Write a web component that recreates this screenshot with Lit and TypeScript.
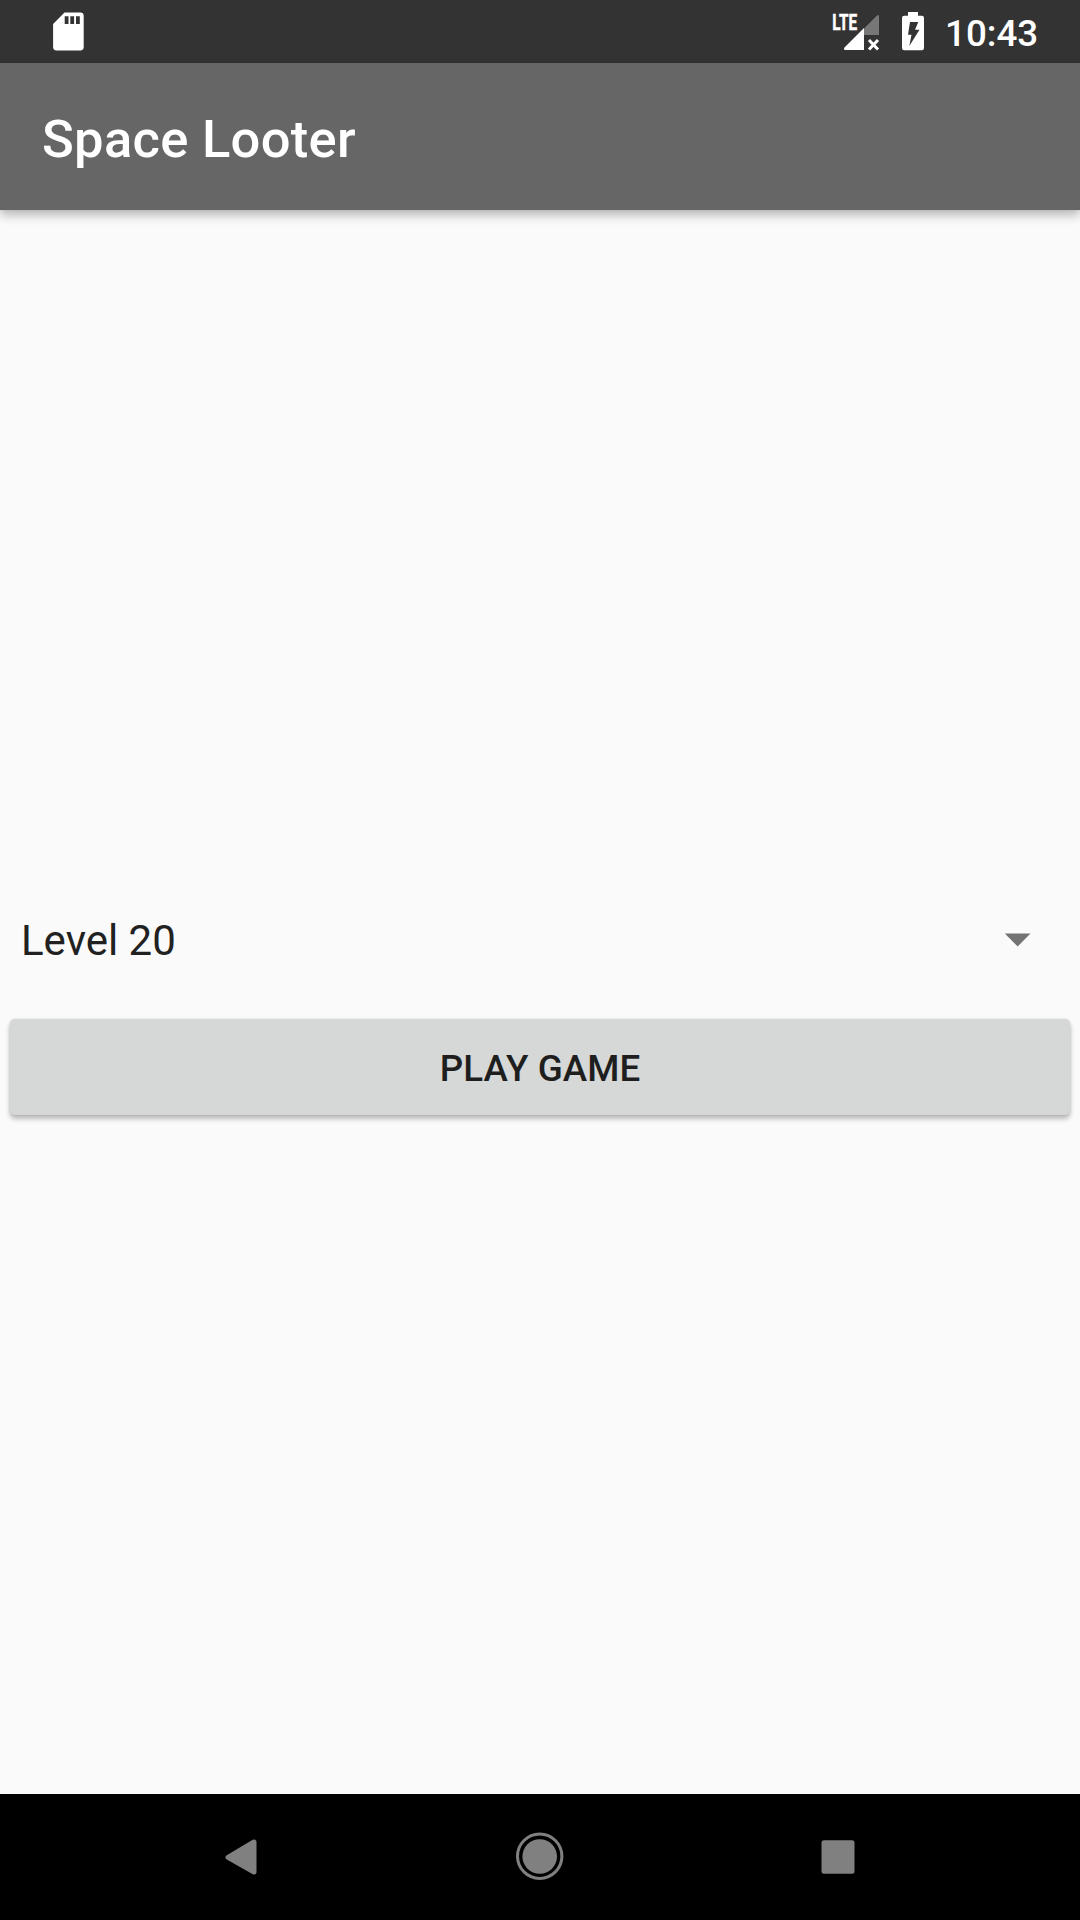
import { LitElement, html, css } from "lit";
import { customElement, property } from "lit/decorators.js";

@customElement("status-bar")
class StatusBar extends LitElement {
  @property() time = "10:43";

  static styles = css`
    :host {
      display: flex;
      align-items: center;
      justify-content: space-between;
      height: 63px;
      background: #333;
      color: #fff;
    }
    svg {
      display: block;
    }
    .group {
      display: flex;
      height: 63px;
    }
    .notifications {
      padding-left: 50px;
    }
    .system {
      padding-right: 42px;
    }
    .network {
      font-family: Roboto, sans-serif;
      font-weight: 700;
      font-size: 22.5px;
      stroke: #fff;
      stroke-width: 0.5px;
    }
    .time {
      margin-left: 13px;
      width: 93px;
      font-size: 36.75px;
      font-weight: 500;
      line-height: 67px;
      white-space: nowrap;
    }
  `;

  render() {
    return html`
      <div class="group notifications">
        <svg width="40" height="63" viewBox="50 0 40 63">
          <path
            fill="#fff"
            fill-rule="evenodd"
            d="M64.5 12.5H80.3a3.4 3.4 0 0 1 3.4 3.4V47a3.4 3.4 0 0 1-3.4 3.4H56.5a3.4 3.4 0 0 1-3.4-3.4V23.9ZM64.7 16.2V24h3.8v-7.8ZM70.3 16.2V24h3.8v-7.8ZM76 16.2V24h3.8v-7.8Z"
          />
        </svg>
      </div>
      <div class="group system">
        <svg width="50" height="63" viewBox="832 0 50 63">
          <path fill="#777" d="M864 28.500 877 15.500Q879 14 879 16.500V35H864Z" />
          <path fill="#fff" d="M864 28V50H845.500Q843 50 844.500 47.500Z" />
          <path d="M869 40 878 49.500M878 40 869 49.500" stroke="#fff" stroke-width="3" />
          <text class="network" x="832.300" y="30" fill="#fff" textLength="24.800" lengthAdjust="spacingAndGlyphs">LTE</text>
        </svg>
        <svg width="50" height="63" viewBox="882 0 50 63">
          <path
            fill="#fff"
            fill-rule="evenodd"
            d="M908 12h10v3.700h3.800a2.200 2.200 0 0 1 2.200 2.200V48a2.200 2.200 0 0 1-2.200 2.200H904.200A2.200 2.200 0 0 1 902 48V17.900a2.200 2.200 0 0 1 2.200-2.200H908ZM910 22 908 34.800H911.500L909.300 46 919.500 29.800H915L918.300 22Z"
          />
        </svg>
        <span class="time">${this.time}</span>
      </div>
    `;
  }
}

@customElement("app-bar")
class AppBar extends LitElement {
  @property() heading = "";

  static styles = css`
    :host {
      display: flex;
      align-items: center;
      height: 147px;
      padding-left: 42px;
      box-sizing: border-box;
      background: #666;
      color: #fff;
      position: relative;
      box-shadow: 0 5px 10px rgba(0, 0, 0, 0.27), 0 0 3px rgba(0, 0, 0, 0.08);
    }
    .title {
      font-size: 52.5px;
      font-weight: 500;
      letter-spacing: 0.3px;
      line-height: 62px;
      padding-top: 4px;
    }
  `;

  render() {
    return html`<span class="title">${this.heading}</span>`;
  }
}

@customElement("nav-bar")
class NavBar extends LitElement {
  static styles = css`
    :host {
      display: flex;
      justify-content: space-between;
      align-items: center;
      box-sizing: border-box;
      height: 126px;
      padding: 0 210px 0 209px;
      background: #000;
    }
    svg {
      display: block;
    }
  `;

  render() {
    return html`
      <svg width="64" height="64" viewBox="209 1825 64 64">
        <path
          d="M228 1857.300 254 1842V1872Z"
          fill="#808080"
          stroke="#808080"
          stroke-width="5"
          stroke-linejoin="round"
        />
      </svg>
      <svg width="64" height="64" viewBox="507.500 1825 64 64">
        <circle cx="539.200" cy="1856.200" r="22.200" fill="none" stroke="#808080" stroke-width="3" />
        <circle cx="539.200" cy="1856.500" r="17.300" fill="#808080" />
      </svg>
      <svg width="64" height="64" viewBox="806 1825 64 64">
        <rect x="821.500" y="1840.300" width="33" height="33.400" rx="2.500" fill="#808080" />
      </svg>
    `;
  }
}

@customElement("app-root")
class AppRoot extends LitElement {
  static styles = css`
    :host {
      display: flex;
      flex-direction: column;
      height: 1920px;
      background: #fafafa;
      color: #212121;
      font-family: Roboto, sans-serif;
      overflow: hidden;
    }
    .content {
      flex: 1;
      display: flex;
      flex-direction: column;
      justify-content: center;
      padding-top: 3px;
    }
    .level {
      display: flex;
      justify-content: space-between;
      align-items: center;
      height: 126px;
      padding: 0 48px 0 21px;
      font-size: 42px;
      line-height: 50px;
    }
    .value {
      padding-top: 2px;
    }
    .arrow {
      display: block;
    }
    .play {
      margin: 16px 10px 15px;
      height: 96px;
      padding: 4px 0 0;
      border: 0;
      border-radius: 5px;
      background: #d6d8d7;
      color: #1e1e1e;
      font-family: inherit;
      font-size: 36.75px;
      font-weight: 500;
      letter-spacing: 0.1px;
      line-height: 44px;
      box-shadow: 0 4px 5px rgba(0, 0, 0, 0.25), 0 0 3px rgba(0, 0, 0, 0.12);
    }
  `;

  render() {
    return html`
      <status-bar></status-bar>
      <app-bar heading="Space Looter"></app-bar>
      <main class="content">
        <div class="level">
          <span class="value">Level 20</span>
          <svg class="arrow" width="28" height="16" viewBox="0 0 28 16">
            <path d="M.800 1.500H26.500L13.650 14.500Z" fill="#737373" />
          </svg>
        </div>
        <button class="play">PLAY GAME</button>
      </main>
      <nav-bar></nav-bar>
    `;
  }
}
